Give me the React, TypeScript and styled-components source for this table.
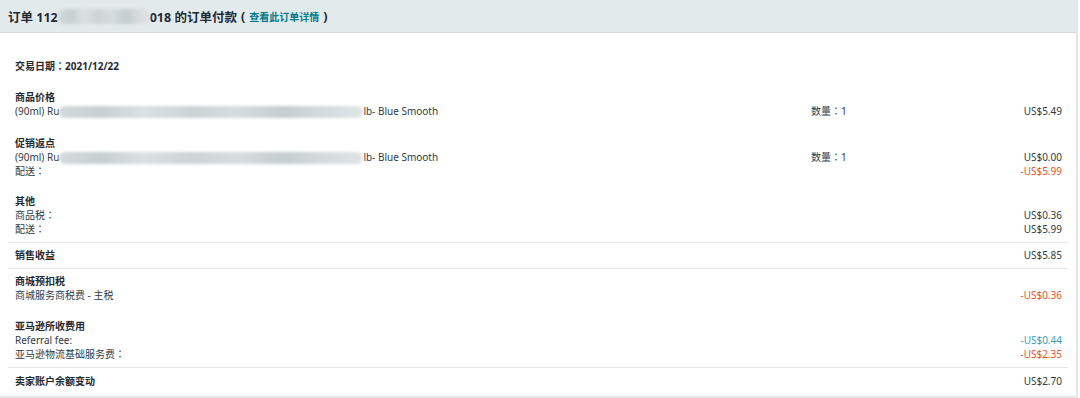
import styled, { createGlobalStyle } from "styled-components";

const GlobalStyle = createGlobalStyle`
    body {
        margin: 0;
        background: #ffffff;
        font-family: "Noto Sans", "Noto Sans CJK SC", sans-serif;
        color: #2f3b44;
    }
`;

//styled-components
const Panel = styled.div`
    width: 1076px;
    height: 396px;
    border-right: 2px solid #e4e7e7;
    border-bottom: 2px solid #e4e7e7;
    background: #ffffff;
    overflow: hidden;
`;

const Header = styled.div`
    height: 32px;
    border-bottom: 1px solid #d5dbdb;
    background: #e3eaeb;
    display: flex;
    align-items: center;
    padding: 0 8px;
    font-size: 12.5px;
    font-weight: bold;
    color: #1f2a33;
    white-space: nowrap;
`;

const DetailLink = styled.span`
    font-size: 10px;
    color: #00798a;
    margin: 0 4px;
`;

const Paren = styled.span<{ $left?: number }>`
    margin-left: ${(p) => p.$left ?? 4}px;
    font-size: 12.5px;
`;

const Blur = styled.span<{ $w: number; $h: number }>`
    display: inline-block;
    width: ${(p) => p.$w}px;
    height: ${(p) => p.$h}px;
    vertical-align: middle;
    border-radius: 7px;
    background: linear-gradient(
        90deg,
        #d3dadc 0%,
        #c6cfd1 14%,
        #dbe1e2 28%,
        #cbd3d5 44%,
        #d7dddf 58%,
        #c4cdcf 74%,
        #d6dcde 88%,
        #dfe4e5 100%
    );
    filter: blur(1.6px);
`;

const Body = styled.div`
    padding: 0 8px;
`;

const Block = styled.div<{ $top: number; $pt?: number; $pb?: number; $line?: boolean }>`
    margin-top: ${(p) => p.$top}px;
    padding: ${(p) => p.$pt || 0}px 6px ${(p) => p.$pb || 0}px 7px;
    border-bottom: ${(p) => (p.$line ? "1px solid #e3e7e8" : "none")};
`;

const Row = styled.div`
    display: grid;
    grid-template-columns: 796px 1fr 120px;
    height: 14px;
    line-height: 14px;
    font-size: 10px;
    white-space: nowrap;
`;

const Label = styled.span`
    font-weight: bold;
    color: #1f2a33;
`;

// centred full-width colon, as the original page font draws it
const Colon = styled.span`
    font-family: "Noto Sans CJK TC", sans-serif;
`;

const Amount = styled.span<{ $tone?: "red" | "teal" }>`
    text-align: right;
    color: ${(p) =>
        p.$tone === "red" ? "#e8522a" : p.$tone === "teal" ? "#3a9fb5" : "#2f3b44"};
`;

const Product = () => (
    <span>
        (90ml) Ru
        <Blur $w={304} $h={12} />
        lb- Blue Smooth
    </span>
);

//Components
const App = () => {
    return (
        <>
            <GlobalStyle />
            <Panel>
                <Header>
                    订单 112
                    <Blur $w={92} $h={15} />
                    018 的订单付款
                    <Paren>(</Paren>
                    <DetailLink>查看此订单详情</DetailLink>
                    <Paren $left={0}>)</Paren>
                </Header>
                <Body>
                    <Block $top={26}>
                        <Row>
                            <Label>
                                交易日期<Colon>：</Colon>2021/12/22
                            </Label>
                        </Row>
                    </Block>
                    <Block $top={17}>
                        <Row>
                            <Label>商品价格</Label>
                        </Row>
                        <Row>
                            <Product />
                            <span>
                                数量<Colon>：</Colon>1
                            </span>
                            <Amount>US$5.49</Amount>
                        </Row>
                    </Block>
                    <Block $top={18}>
                        <Row>
                            <Label>促销返点</Label>
                        </Row>
                        <Row>
                            <Product />
                            <span>
                                数量<Colon>：</Colon>1
                            </span>
                            <Amount>US$0.00</Amount>
                        </Row>
                        <Row>
                            <span>
                                配送<Colon>：</Colon>
                            </span>
                            <span />
                            <Amount $tone="red">-US$5.99</Amount>
                        </Row>
                    </Block>
                    <Block $top={16} $pb={6} $line>
                        <Row>
                            <Label>其他</Label>
                        </Row>
                        <Row>
                            <span>
                                商品税<Colon>：</Colon>
                            </span>
                            <span />
                            <Amount>US$0.36</Amount>
                        </Row>
                        <Row>
                            <span>
                                配送<Colon>：</Colon>
                            </span>
                            <span />
                            <Amount>US$5.99</Amount>
                        </Row>
                    </Block>
                    <Block $top={0} $pt={5} $pb={6} $line>
                        <Row>
                            <Label>销售收益</Label>
                            <span />
                            <Amount>US$5.85</Amount>
                        </Row>
                    </Block>
                    <Block $top={0} $pt={5}>
                        <Row>
                            <Label>商城预扣税</Label>
                        </Row>
                        <Row>
                            <span>商城服务商税费 - 主税</span>
                            <span />
                            <Amount $tone="red">-US$0.36</Amount>
                        </Row>
                    </Block>
                    <Block $top={17} $pb={6} $line>
                        <Row>
                            <Label>亚马逊所收费用</Label>
                        </Row>
                        <Row>
                            <span>Referral fee:</span>
                            <span />
                            <Amount $tone="teal">-US$0.44</Amount>
                        </Row>
                        <Row>
                            <span>
                                亚马逊物流基础服务费<Colon>：</Colon>
                            </span>
                            <span />
                            <Amount $tone="red">-US$2.35</Amount>
                        </Row>
                    </Block>
                    <Block $top={0} $pt={6}>
                        <Row>
                            <Label>卖家账户余额变动</Label>
                            <span />
                            <Amount>US$2.70</Amount>
                        </Row>
                    </Block>
                </Body>
            </Panel>
        </>
    );
};

export default App;
